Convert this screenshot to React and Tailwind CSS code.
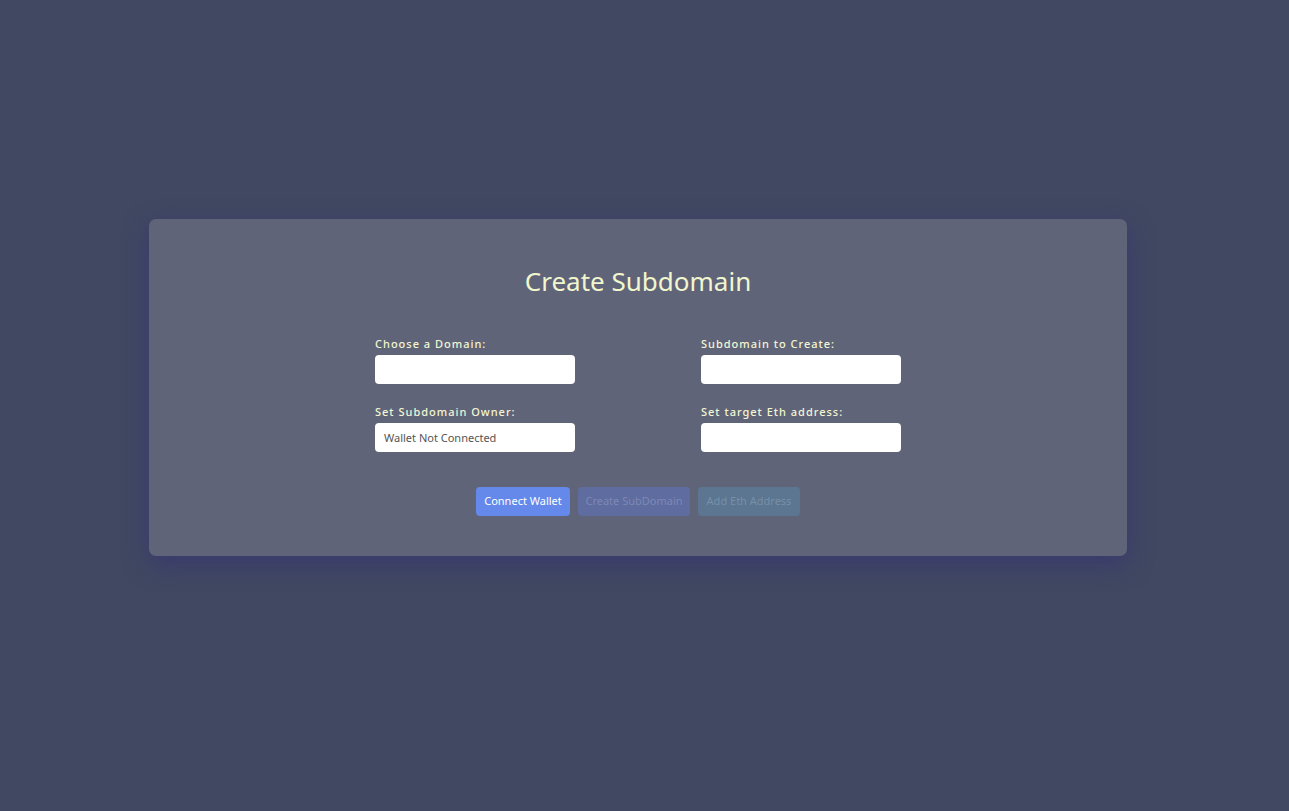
import React from 'react';

const Field = ({ label, placeholder }) => (
  <div className="flex flex-col">
    <label className="text-[11px] leading-4 font-medium tracking-[1px] text-[#f3f6d2] mb-[3px]">{label}</label>
    <input
      className="h-[29px] w-[200px] rounded-[4px] bg-white px-[9px] text-[11px] text-[#555] placeholder-[#555] outline-none"
      placeholder={placeholder}
    />
  </div>
);

export default function App() {
  return (
    <div className="min-h-screen w-full bg-[#414862] flex items-start justify-center pt-[219px] pr-[13px]" style={{ fontFamily: '"Noto Sans", "Open Sans", sans-serif' }}>
      <div className="w-[978px] rounded-[7px] bg-[#5f6479] pt-[44px] pb-[40px] shadow-[0_8px_24px_rgba(50,45,120,0.55)]">
        <h1 className="text-center text-[26px] leading-[36px] font-normal text-[#f2f6cd]">Create Subdomain</h1>

        <div className="mt-[37px] grid grid-cols-[200px_200px] justify-center gap-x-[126px] gap-y-[20px]">
          <Field label="Choose a Domain:" />
          <Field label="Subdomain to Create:" />
          <Field label="Set Subdomain Owner:" placeholder="Wallet Not Connected" />
          <Field label="Set target Eth address:" />
        </div>

        <div className="mt-[35px] flex justify-center gap-[8px]">
          <button className="h-[29px] w-[94px] rounded-[4px] bg-[#6589ea] text-[11px] text-white">Connect Wallet</button>
          <button className="h-[29px] w-[112px] rounded-[4px] bg-[#5f6ca0] text-[11px] text-[#7c88b4]">Create SubDomain</button>
          <button className="h-[29px] w-[102px] rounded-[4px] bg-[#5c7590] text-[11px] text-[#7690a8]">Add Eth Address</button>
        </div>
      </div>
    </div>
  );
}
